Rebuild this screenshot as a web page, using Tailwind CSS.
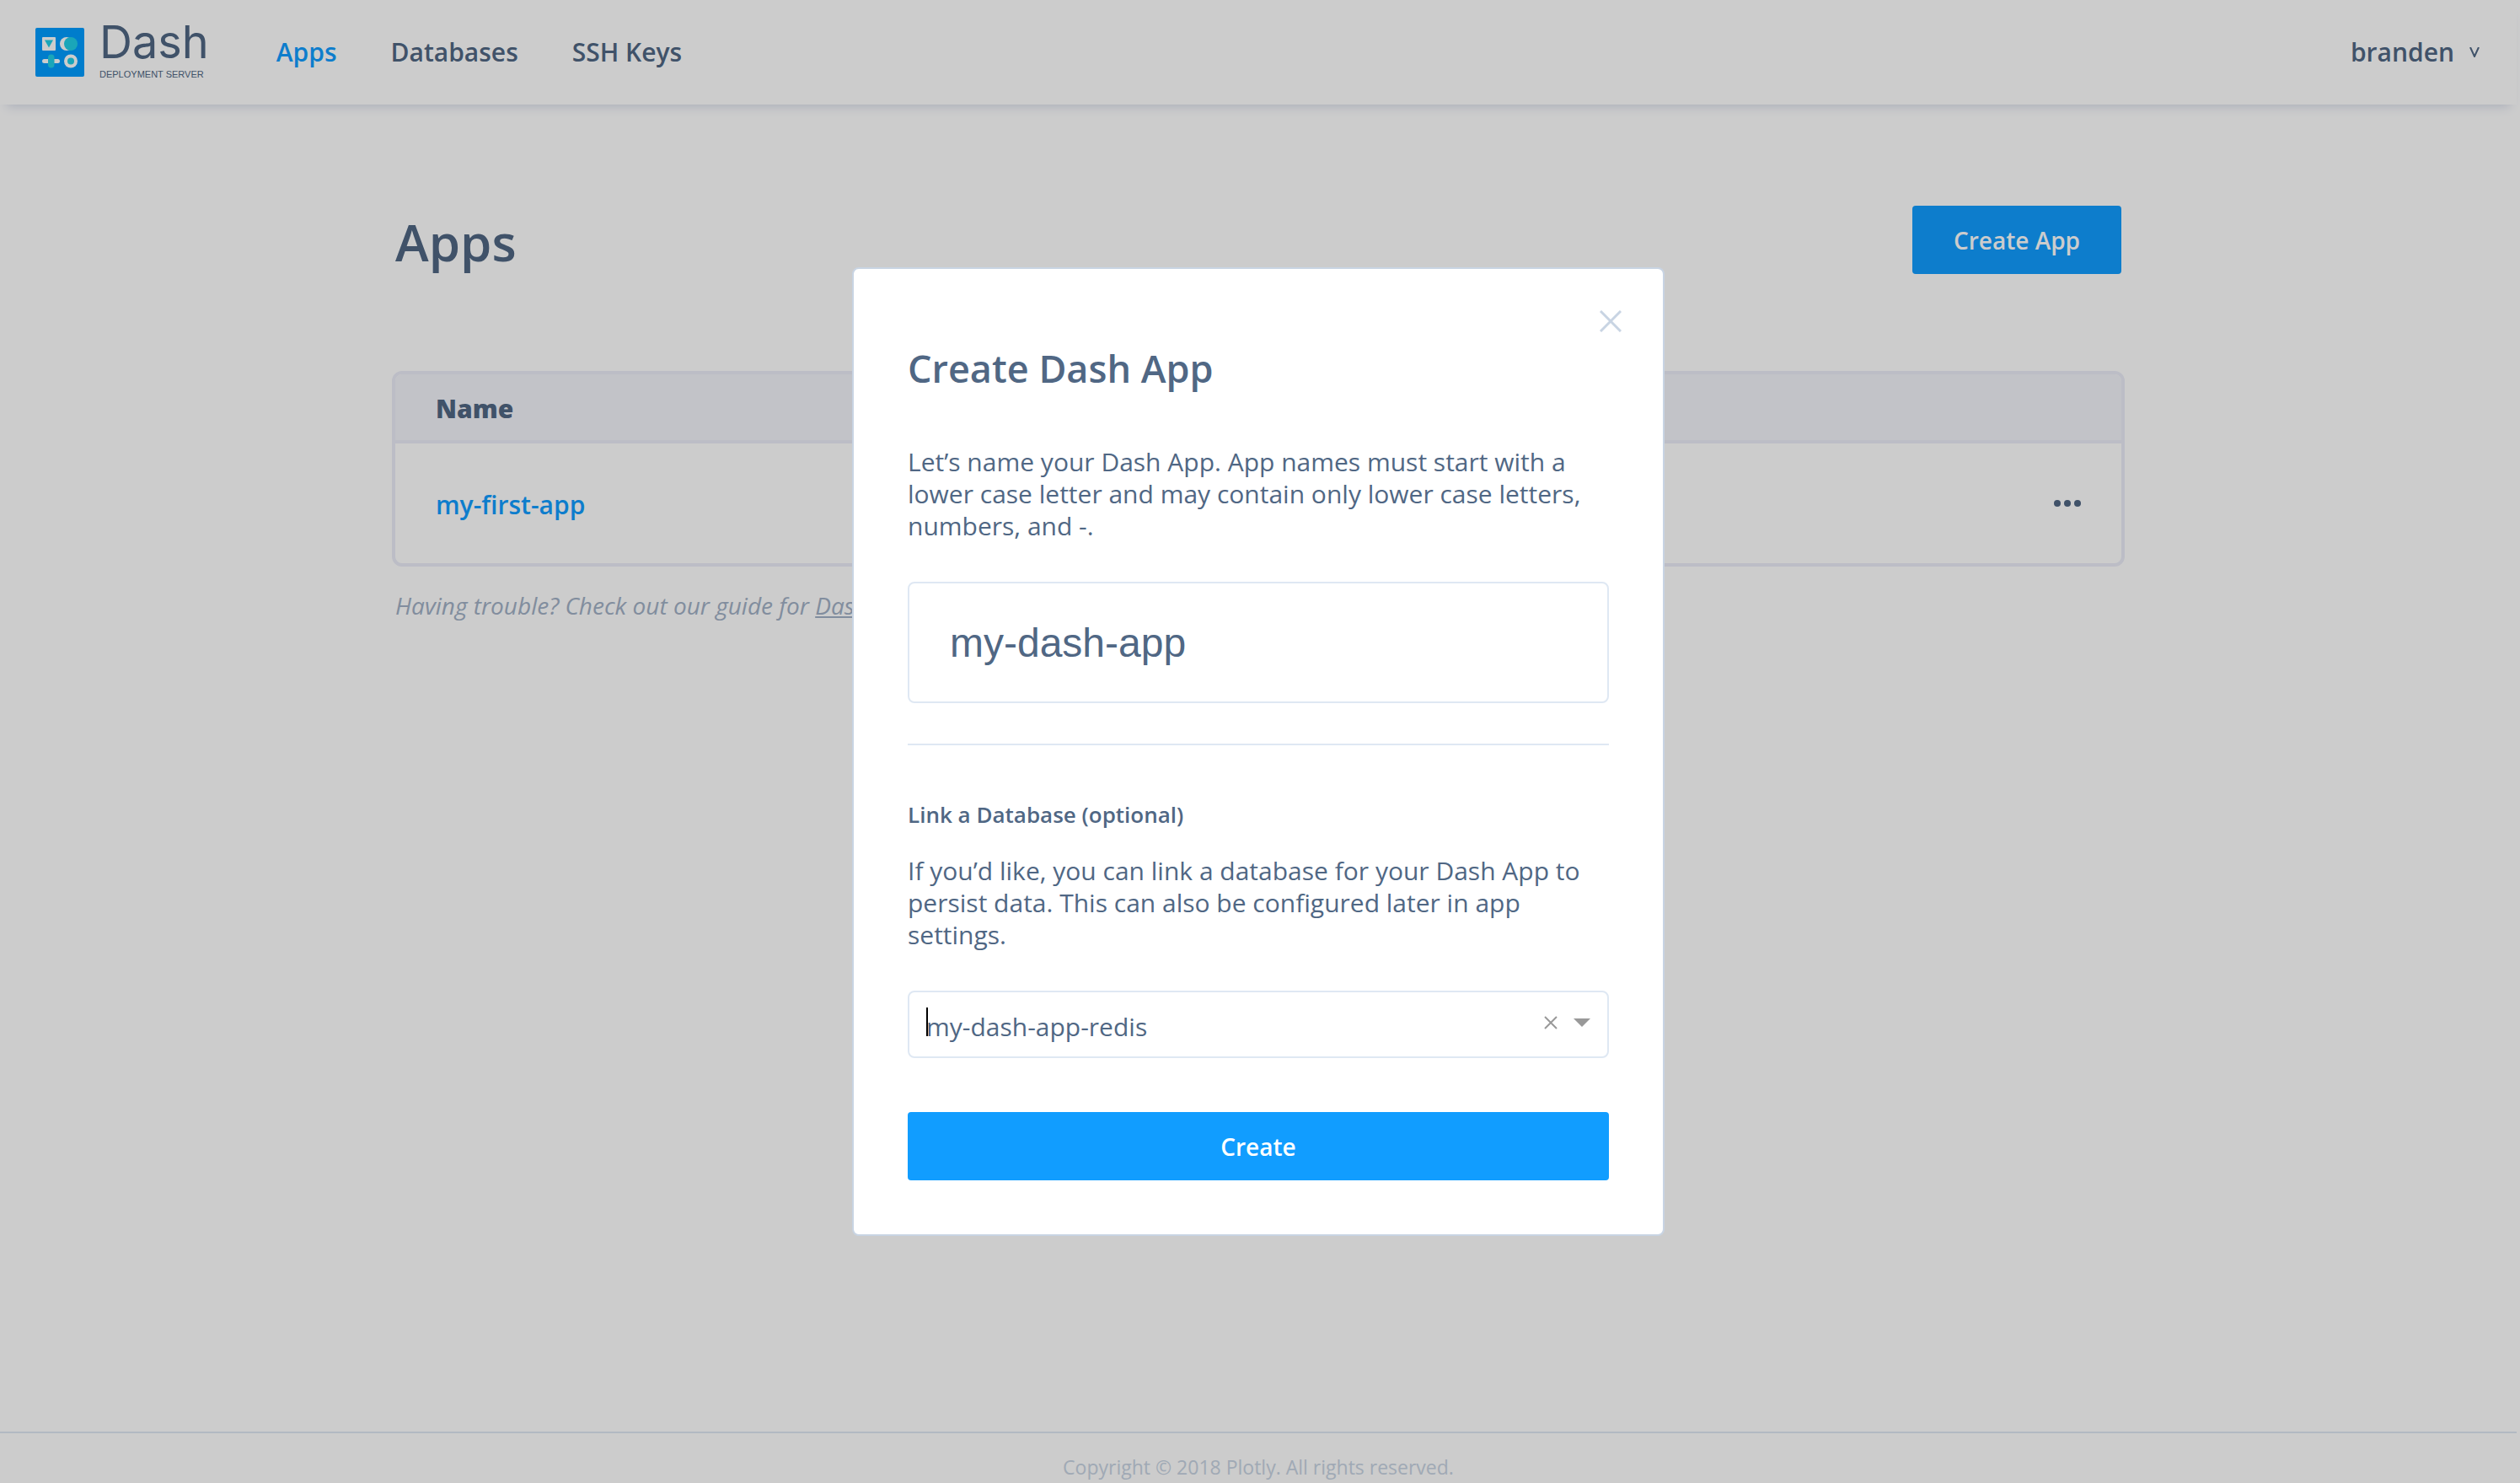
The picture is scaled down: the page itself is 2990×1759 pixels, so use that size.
<!DOCTYPE html>
<html lang="en">
<head>
<meta charset="utf-8">
<title>Dash Deployment Server</title>
<script src="https://cdn.jsdelivr.net/npm/@tailwindcss/browser@4"></script>
</head>
<body class="bg-white font-['Open_Sans',sans-serif] text-[#506784]">
<div class="flex min-h-screen flex-col pr-1">
  <header class="flex h-[124px] items-center justify-between pl-[42px] pr-11 shadow-[0_10px_12px_-8px_#d4d9e8]">
    <div class="flex items-center gap-20">
      <a href="#" class="flex items-center gap-[18px]" aria-label="Dash Deployment Server">
        <svg class="size-[58px]" viewBox="0 0 58 58" aria-hidden="true">
          <rect width="58" height="58" rx="2" fill="#009dff"/>
          <rect x="8" y="11" width="16" height="16" rx="1" fill="#fff"/>
          <path d="M11 14.500h10l-5 9z" fill="#21d0e8"/>
          <circle cx="37" cy="19" r="8" fill="#fff"/>
          <circle cx="42" cy="19" r="8" fill="#21d0e8"/>
          <rect x="8" y="37" width="21" height="5" rx="2.500" fill="#fff"/>
          <rect x="15" y="31.500" width="7.500" height="16" rx="3.750" fill="#21d0e8"/>
          <circle cx="42" cy="39.500" r="8" fill="#fff"/>
          <circle cx="42" cy="39.500" r="4" fill="#21d0e8"/>
        </svg>
        <span class="flex flex-col gap-2">
          <span class="font-[Inter,sans-serif] text-[54px] leading-11">Dash</span>
          <span class="font-['Liberation_Sans',sans-serif] text-[11px] leading-4">DEPLOYMENT SERVER</span>
        </span>
      </a>
      <nav class="flex gap-16 text-[30px] leading-10 font-semibold">
        <a href="#" class="text-[#119dff]">Apps</a>
        <a href="#">Databases</a>
        <a href="#">SSH Keys</a>
      </nav>
    </div>
    <button type="button" class="flex items-center gap-[18px] text-[30px] leading-10 font-semibold">branden
      <svg class="size-3" viewBox="0 0 12 12" fill="none" stroke="currentColor" stroke-width="2" aria-hidden="true"><path d="M1 0l5 11L11 0"/></svg>
    </button>
  </header>

  <main class="mx-auto w-full max-w-[2048px] grow pt-[120px]">
    <div class="flex items-start justify-between">
      <h1 class="text-[60px] leading-[86px] font-semibold">Apps</h1>
      <button type="button" class="h-[81px] w-[248px] rounded bg-[#119dff] text-[28px] font-semibold text-white">Create App</button>
    </div>
    <div class="-mx-1 mt-[110px] overflow-hidden rounded-xl border-4 border-[#ebedf8]">
      <table class="w-full text-left">
        <thead class="border-b-4 border-[#ebedf8] bg-[#f3f4fa]">
          <tr><th scope="col" class="h-20 pt-1 pl-12 text-[30px] leading-10 font-extrabold">Name</th><th scope="col" aria-label="Actions"></th></tr>
        </thead>
        <tbody>
          <tr>
            <td class="h-36 pt-1 pl-12 text-[30px] leading-10 font-semibold"><a href="#" class="text-[#119dff]">my-first-app</a></td>
            <td class="pr-12">
              <button type="button" aria-label="More actions" class="ml-auto flex gap-1">
                <span class="size-2 rounded-full bg-[#506784]"></span><span class="size-2 rounded-full bg-[#506784]"></span><span class="size-2 rounded-full bg-[#506784]"></span>
              </button>
            </td>
          </tr>
        </tbody>
      </table>
    </div>
    <p class="mt-[26px] text-[28px] leading-10 text-[#a2b1c6] italic">Having trouble? Check out our guide for <a href="#" class="underline">Dash Apps</a></p>
  </main>

  <footer class="border-t-2 border-[#dfe8f3] pt-6 pb-0.5 text-center text-[23px] leading-[33px] text-[#c8d4e3]">Copyright © 2018 Plotly. All rights reserved.</footer>
</div>

<div class="fixed inset-0 flex items-start justify-center bg-black/20 pt-[317px] pr-1">
  <form role="dialog" aria-modal="true" aria-labelledby="title" class="relative w-[964px] rounded-lg border-2 border-[#c8d4e3] bg-white px-16 pt-[90px] pb-16">
    <button type="button" aria-label="Close" class="absolute top-[49px] right-[49px]">
      <svg class="size-[26px] text-[#c8d4e3]" viewBox="0 0 26 26" fill="none" stroke="currentColor" stroke-width="3" aria-hidden="true"><path d="M1 1l24 24M25 1L1 25"/></svg>
    </button>
    <h2 id="title" class="text-[45px] leading-14 font-semibold">Create Dash App</h2>
    <label for="name" class="mt-16 block text-[30px] leading-[38px]">Let’s name your Dash App. App names must start with a lower case letter and may contain only lower case letters, numbers, and -.</label>
    <input id="name" type="text" value="my-dash-app" class="mt-[47px] block h-36 w-full rounded-lg border-2 border-[#dfe8f3] px-12 font-['Liberation_Sans',sans-serif] text-[48px] outline-none">
    <hr class="mt-12 border-t-2 border-[#dfe8f3]">
    <h3 class="mt-16 text-[26px] leading-9 font-semibold">Link a Database (optional)</h3>
    <label for="db" class="mt-[30px] block text-[30px] leading-[38px]">If you’d like, you can link a database for your Dash App to persist data. This can also be configured later in app settings.</label>
    <div class="relative mt-[47px]">
      <select id="db" class="block h-20 w-full appearance-none rounded-lg border-2 border-[#dfe8f3] bg-white pt-1 pl-5 text-[30px] outline-none"><option>my-dash-app-redis</option></select>
      <span class="absolute top-5 left-[22px] h-[34px] w-0.5 bg-black"></span>
      <div class="absolute top-[30px] right-[22px] flex items-center gap-[19px] text-[#999]">
        <button type="button" aria-label="Clear"><svg class="size-4" viewBox="0 0 16 16" fill="none" stroke="currentColor" stroke-width="2" aria-hidden="true"><path d="M1 1l14 14M15 1L1 15"/></svg></button>
        <svg class="h-2.5 w-5" viewBox="0 0 20 10" fill="currentColor" aria-hidden="true"><path d="M0 0h20L10 10z"/></svg>
      </div>
    </div>
    <button type="submit" class="mt-16 h-[81px] w-full rounded bg-[#119dff] text-[28px] font-semibold text-white">Create</button>
  </form>
</div>
</body>
</html>
